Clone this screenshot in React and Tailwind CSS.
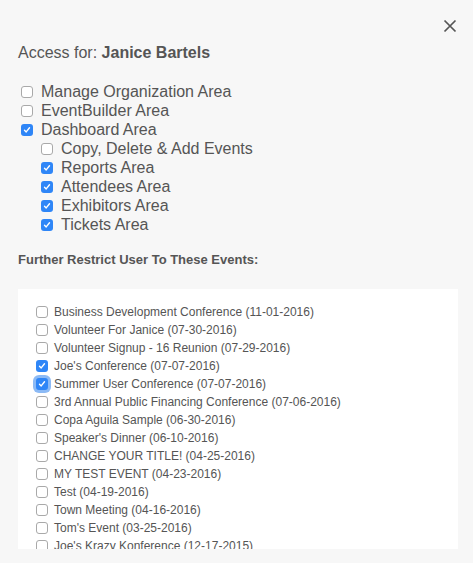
import React from 'react';

const areas = [
    { label: 'Manage Organization Area', checked: false },
    { label: 'EventBuilder Area', checked: false },
    { label: 'Dashboard Area', checked: true },
];

const dashboardAreas = [
    { label: 'Copy, Delete & Add Events', checked: false },
    { label: 'Reports Area', checked: true },
    { label: 'Attendees Area', checked: true },
    { label: 'Exhibitors Area', checked: true },
    { label: 'Tickets Area', checked: true },
];

const events = [
    { label: 'Business Development Conference (11-01-2016)', checked: false },
    { label: 'Volunteer For Janice (07-30-2016)', checked: false },
    { label: 'Volunteer Signup - 16 Reunion (07-29-2016)', checked: false },
    { label: "Joe's Conference (07-07-2016)", checked: true },
    { label: 'Summer User Conference (07-07-2016)', checked: true, focused: true },
    { label: '3rd Annual Public Financing Conference (07-06-2016)', checked: false },
    { label: 'Copa Aguila Sample (06-30-2016)', checked: false },
    { label: "Speaker's Dinner (06-10-2016)", checked: false },
    { label: 'CHANGE YOUR TITLE! (04-25-2016)', checked: false },
    { label: 'MY TEST EVENT (04-23-2016)', checked: false },
    { label: 'Test (04-19-2016)', checked: false },
    { label: 'Town Meeting (04-16-2016)', checked: false },
    { label: "Tom's Event (03-25-2016)", checked: false },
    { label: "Joe's Krazy Konference (12-17-2015)", checked: false },
];

const Box = ({ checked, focused }) => {
    if (checked) {
        return (
            <span className={`w-3 h-3 shrink-0 rounded-[3px] bg-[#2f86f7] flex items-center justify-center ${focused ? 'ring-[3px] ring-[#8cbaf5]' : ''}`}>
                <svg width="8" height="8" viewBox="0 0 8 8" fill="none">
                    <path d="M1.5 4.2 L3.2 5.9 L6.5 1.8" stroke="white" strokeWidth="1.4" strokeLinecap="round" strokeLinejoin="round" />
                </svg>
            </span>
        );
    }
    return <span className="w-3 h-3 shrink-0 rounded-[3px] bg-white border border-[#a9a9a9]"></span>;
};

const App = () => {
    return (
        <div className="bg-[#f7f7f7] h-[563px] overflow-hidden text-[#555] font-['Liberation_Sans',Arial,sans-serif] pl-[18px] pr-[15px]">
            <div className="flex justify-end pt-[19px] pr-[1px]">
                <svg width="14" height="14" viewBox="0 0 14 14">
                    <path d="M1.5 1.5 L12.5 12.5 M12.5 1.5 L1.5 12.5" stroke="#555" strokeWidth="1.7" />
                </svg>
            </div>

            <p className="mt-[10px] text-[16px] leading-[20px]">
                Access for: <span className="font-bold">Janice Bartels</span>
            </p>

            <div className="mt-[19px] pl-[3px]">
                {areas.map((a, i) => (
                    <label key={i} className="flex items-center gap-2 h-[19px] text-[16px]">
                        <Box checked={a.checked} />
                        <span>{a.label}</span>
                    </label>
                ))}
                <div className="pl-5">
                    {dashboardAreas.map((a, i) => (
                        <label key={i} className="flex items-center gap-2 h-[19px] text-[16px]">
                            <Box checked={a.checked} />
                            <span>{a.label}</span>
                        </label>
                    ))}
                </div>
            </div>

            <h4 className="mt-[18px] text-[13px] leading-[16px] font-bold">Further Restrict User To These Events:</h4>

            <div className="mt-[21px] bg-white h-[260px] overflow-hidden pt-[14px] pl-[18px]">
                {events.map((e, i) => (
                    <label key={i} className="flex items-center gap-[6px] h-[18px] text-[12px]">
                        <Box checked={e.checked} focused={e.focused} />
                        <span>{e.label}</span>
                    </label>
                ))}
            </div>
        </div>
    );
};

export default App;
